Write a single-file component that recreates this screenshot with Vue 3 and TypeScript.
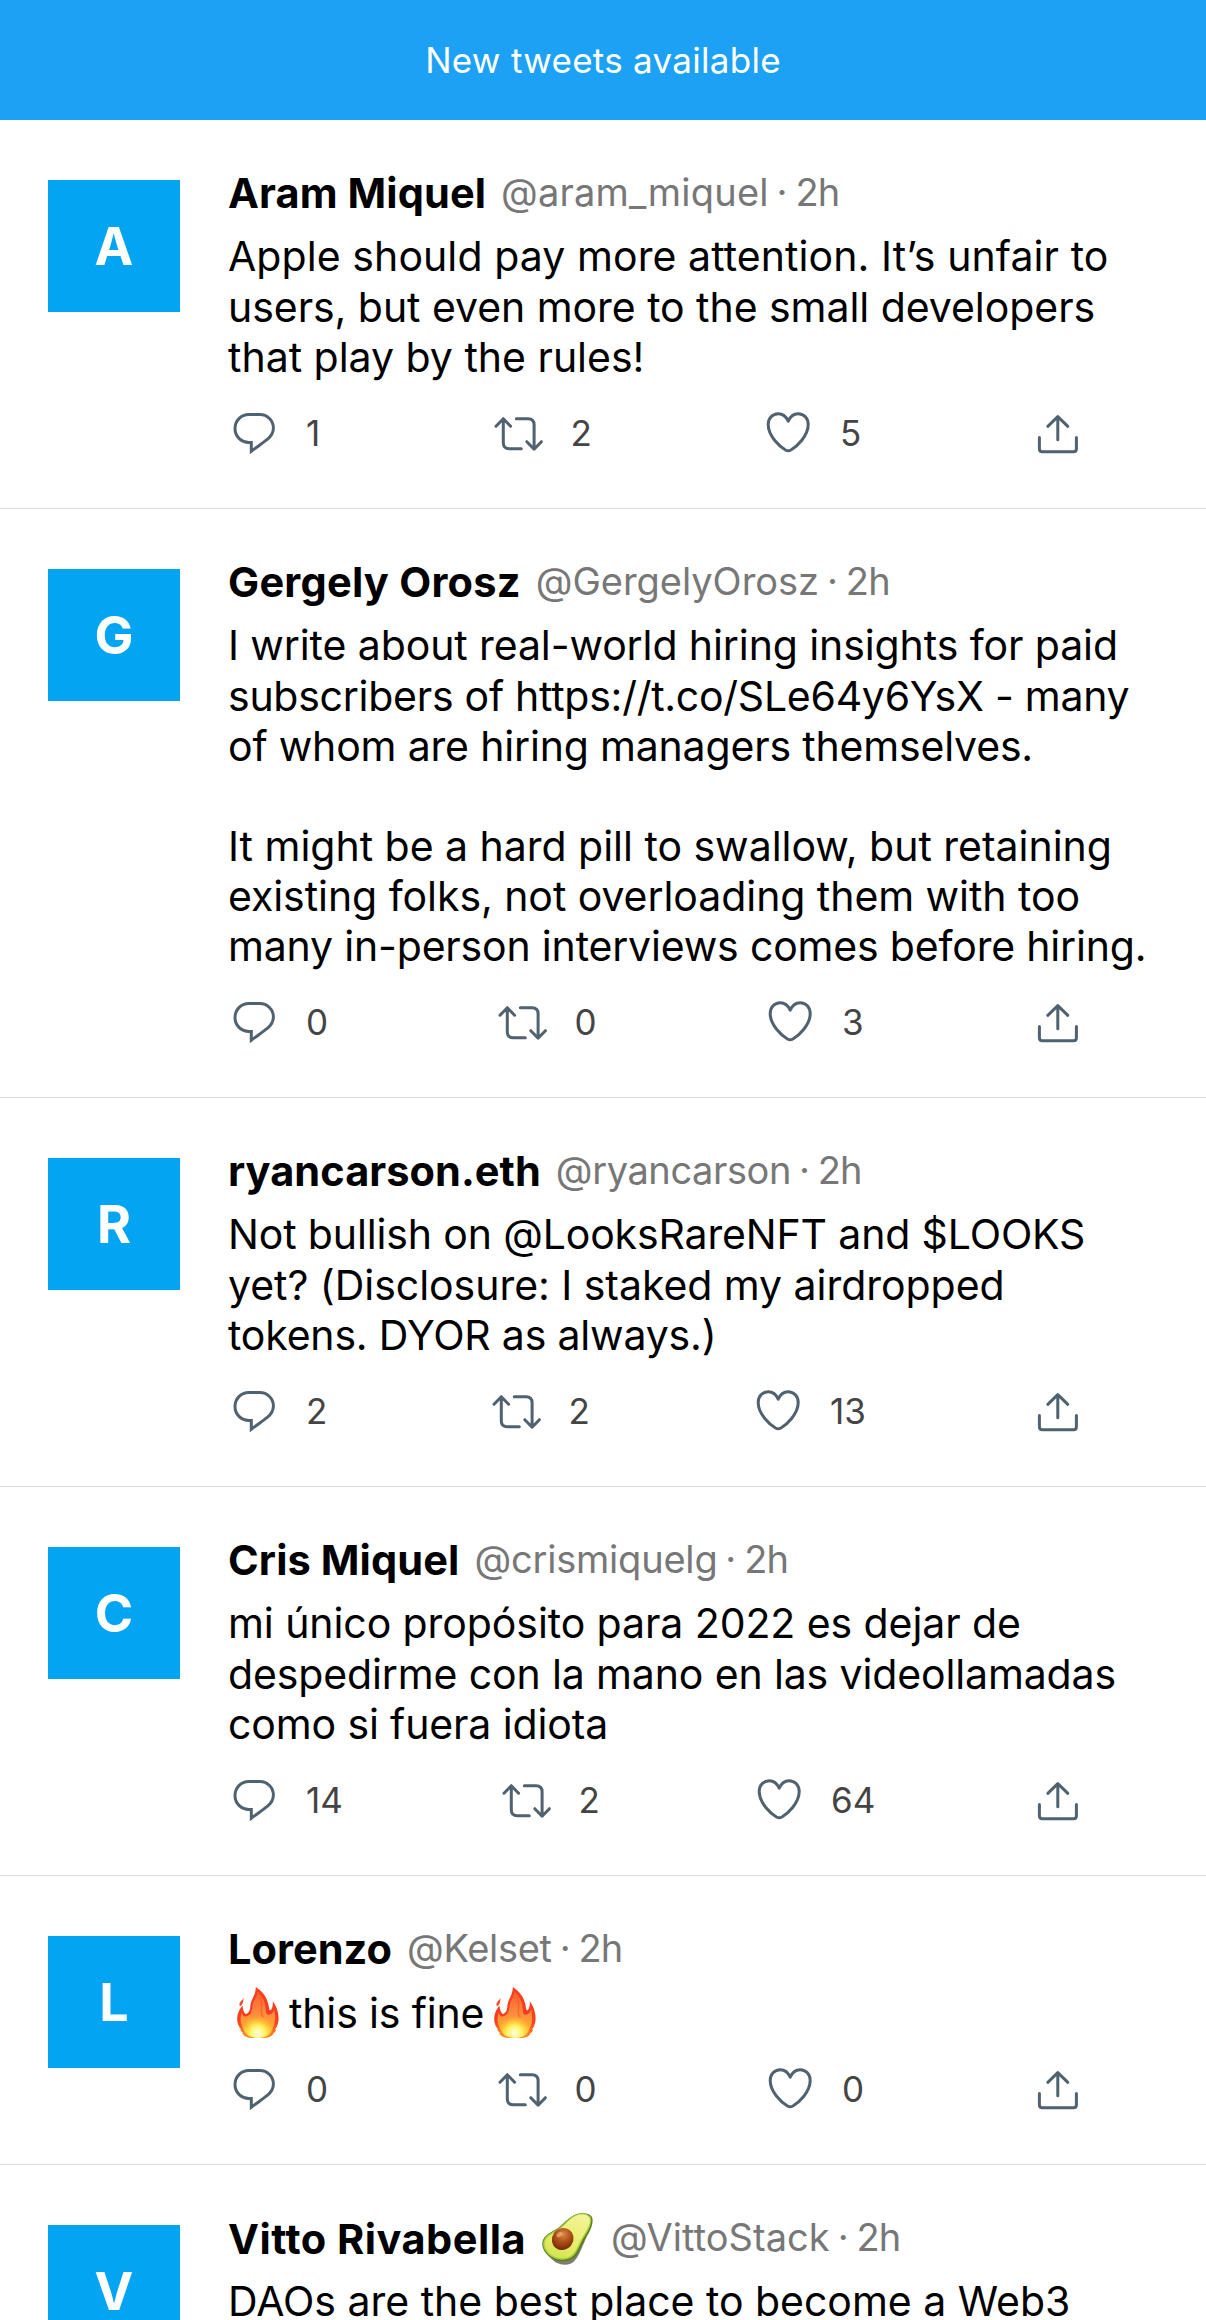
<script setup lang="ts">
interface Line {
  text: string
  ls: number
}
interface Tweet {
  initial: string
  name: string
  nameLs: number
  handle: string
  handleLs: number
  avocado?: boolean
  fire?: boolean
  lines: Line[]
  counts: [string, string, string]
  cols: [number, number, number]
}

const tweets: Tweet[] = [
  {
    initial: 'A', name: 'Aram Miquel', nameLs: 0.1, handle: '@aram_miquel', handleLs: 0.2,
    lines: [
      { text: 'Apple should pay more attention. It’s unfair to', ls: 0.08 },
      { text: 'users, but even more to the small developers', ls: -0.05 },
      { text: 'that play by the rules!', ls: -0.01 },
    ],
    counts: ['1', '2', '5'], cols: [261, 270, 270],
  },
  {
    initial: 'G', name: 'Gergely Orosz', nameLs: 0.25, handle: '@GergelyOrosz', handleLs: -0.03,
    lines: [
      { text: 'I write about real-world hiring insights for paid', ls: -0.1 },
      { text: 'subscribers of https://t.co/SLe64y6YsX - many', ls: -0.26 },
      { text: 'of whom are hiring managers themselves.', ls: -0.18 },
      { text: '', ls: 0 },
      { text: 'It might be a hard pill to swallow, but retaining', ls: -0.02 },
      { text: 'existing folks, not overloading them with too', ls: -0.06 },
      { text: 'many in-person interviews comes before hiring.', ls: -0.18 },
    ],
    counts: ['0', '0', '3'], cols: [265, 268, 268],
  },
  {
    initial: 'R', name: 'ryancarson.eth', nameLs: 0.05, handle: '@ryancarson', handleLs: -0.4,
    lines: [
      { text: 'Not bullish on @LooksRareNFT and $LOOKS', ls: -0.14 },
      { text: 'yet? (Disclosure: I staked my airdropped', ls: -0.04 },
      { text: 'tokens. DYOR as always.)', ls: -0.18 },
    ],
    counts: ['2', '2', '13'], cols: [259, 262, 280],
  },
  {
    initial: 'C', name: 'Cris Miquel', nameLs: 0.12, handle: '@crismiquelg', handleLs: -0.2,
    lines: [
      { text: 'mi único propósito para 2022 es dejar de', ls: -0.08 },
      { text: 'despedirme con la mano en las videollamadas', ls: -0.13 },
      { text: 'como si fuera idiota', ls: -0.13 },
    ],
    counts: ['14', '2', '64'], cols: [269, 253, 279],
  },
  {
    initial: 'L', name: 'Lorenzo', nameLs: 0.05, handle: '@Kelset', handleLs: -0.3, fire: true,
    lines: [{ text: 'this is fine', ls: -0.15 }],
    counts: ['0', '0', '0'], cols: [265, 268, 268],
  },
  {
    initial: 'V', name: 'Vitto Rivabella', nameLs: 0.5, handle: '@VittoStack', handleLs: 0.05, avocado: true,
    lines: [{ text: 'DAOs are the best place to become a Web3', ls: -0.02 }],
    counts: ['0', '0', '0'], cols: [265, 268, 268],
  },
]

const columns = (t: Tweet) => t.cols.map((c) => `${c}px`).join(' ') + ' 1fr'
</script>

<template>
  <main class="screen">
    <!-- shared artwork -->
    <svg class="defs" width="0" height="0" aria-hidden="true">
      <defs>
        <linearGradient id="flameOuter" x1="0" y1="0" x2="0" y2="1">
          <stop offset="0" stop-color="#f8401c" />
          <stop offset="0.65" stop-color="#fb3a20" />
          <stop offset="1" stop-color="#ff8f1f" />
        </linearGradient>
        <linearGradient id="flameInner" x1="0" y1="0" x2="0" y2="1">
          <stop offset="0" stop-color="#f95c30" />
          <stop offset="0.45" stop-color="#fd8a3e" />
          <stop offset="0.75" stop-color="#ffa52f" />
          <stop offset="1" stop-color="#ffdd3a" />
        </linearGradient>
        <radialGradient id="flameCore" cx="0.5" cy="0.84" r="0.55">
          <stop offset="0" stop-color="#fffee8" />
          <stop offset="0.45" stop-color="#fff25c" />
          <stop offset="1" stop-color="#ffc62e" stop-opacity="0" />
        </radialGradient>
        <linearGradient id="avoFlesh" x1="0.8" y1="0" x2="0.3" y2="1">
          <stop offset="0" stop-color="#f3f397" />
          <stop offset="0.6" stop-color="#e8ee6c" />
          <stop offset="1" stop-color="#d3e554" />
        </linearGradient>
        <radialGradient id="avoPit" cx="0.4" cy="0.32" r="0.7">
          <stop offset="0" stop-color="#dd8648" />
          <stop offset="0.45" stop-color="#b2551a" />
          <stop offset="1" stop-color="#742a00" />
        </radialGradient>
        <symbol id="fire" viewBox="0 0 42 51">
          <path fill="url(#flameOuter)" d="M18.8 0C24 3.5 30.5 9.5 31.8 19.5C32 22 32.4 23.6 33.6 23.2C35.4 22.4 36 18 35.8 14.2C38.5 17.5 41.6 24 41.6 31.5C41.6 36 40.2 40 37.8 43L39.5 42.6C38.5 44.8 36.8 46.2 35.5 47L36.4 47.2C34.5 49.5 31 51 27.5 51H14C10 51 6.2 48.6 5 45.8L6.6 46.4C5 45 3.6 43.8 3 42.6L4.4 42.8C1.8 40 .2 36.5 .2 32C.2 26 3 21.5 5.5 18.5C5.7 22 6.5 25 8.5 27C12 26.5 13.2 23 13.4 18.5C13.8 12.5 18.8 8.5 18.8 0Z" />
          <path fill="#fb4a26" d="M6.8 10.8C6 13.5 6.6 16 4.4 18.5C2.4 20 1.8 17.5 3 15.5C4 13.6 5.6 13 6.8 10.8Z" />
          <path fill="url(#flameInner)" d="M20.5 4.5C25 9 28.8 15 28.8 22.5C28.8 27 30 28.5 33 27.5C35.5 26.5 36.6 24.5 37.2 22.5C39 30 38.6 37 35 42.5C32 47.5 28.5 50.5 21 50.5C13.5 50.5 8.5 46.5 5.6 40.5C3 35.5 3 30 4.8 25.5C5.4 27.8 6.4 29.8 8.8 29.4C14.5 28.5 15.2 23 15.6 18.5C16 13.5 20.5 10 20.5 4.5Z" />
          <path fill="none" stroke="#f9581f" stroke-width="1.2" stroke-opacity="0.7" d="M22.5 10C26.5 15 24.5 20 24.2 24C24 27 25 29 26.5 30" />
          <path fill="url(#flameCore)" d="M21 20C27 27 36 33 36.5 40C36 47 29.5 51 21 51C12.5 51 5.5 46.5 4.8 40C5 34 17.5 30 21 20Z" />
        </symbol>
        <symbol id="avocado" viewBox="0 0 51 52">
          <path fill="#6b6555" opacity="0.85" d="M8 44C13 51 22 53.5 29 50.5C36 47 38.5 37 42 30L46 20L30 40Z" />
          <path fill="#5c7f1d" d="M37 .5C42 -.3 49 .2 50.3 5C51.8 12 47 20 42.5 27C39 33 37.5 39 33.5 43.5C28 49.3 17 50 9 45C1.5 40 -1.5 32 1.2 26.5C4.5 20 12 18.5 18 13.5C24 8.5 29 2 37 .5Z" />
          <path fill="#a9cc40" d="M37 .8C42 0 47.5 1 49 5C50.2 11.5 45.5 19 41 26C37.5 32 36 38 32 42.2C26.5 47.7 16.5 48.3 9.5 43.8C2.5 39 -.5 32 2 26.8C5 20.5 12.5 19 18.5 14C24.5 9 29.5 2.2 37 .8Z" />
          <path fill="url(#avoFlesh)" d="M37.5 1.6C42 .9 46.8 1.9 47.8 5.8C48.8 11.5 44.4 18 39.9 25.2C36.4 31.2 34.9 36.8 30.9 41C25.7 46.2 16.9 46.7 10.4 42.6C4.1 38.5 1.2 32 3.4 27.4C6.1 21.6 13.2 20 19.2 15C25.2 10 30.3 3 37.5 1.6Z" />
          <ellipse cx="20.7" cy="26" rx="10.6" ry="11.3" transform="rotate(35 20.7 26)" fill="url(#avoPit)" />
          <ellipse cx="17.6" cy="21.5" rx="3.4" ry="2.2" transform="rotate(-35 17.6 21.5)" fill="#f0b98a" opacity="0.65" />
        </symbol>
      </defs>
    </svg>

    <div class="banner">New tweets available</div>

    <article v-for="t in tweets" :key="t.handle" class="tweet">
      <div class="avatar">{{ t.initial }}</div>
      <div class="content">
        <header class="head" :class="{ 'has-emoji': t.avocado }">
          <span class="name" :style="{ letterSpacing: t.nameLs + 'px' }">{{ t.name }}</span>
          <svg v-if="t.avocado" class="avocado" width="51" height="52"><use href="#avocado" /></svg>
          <span class="meta"><span :style="{ letterSpacing: t.handleLs + 'px' }">{{ t.handle }}</span><span class="dot">{{ ' · ' }}</span><span class="time">2h</span></span>
        </header>

        <div class="body" :class="{ fiery: t.fire }">
          <svg v-if="t.fire" class="fire" width="42" height="51"><use href="#fire" /></svg>
          <div v-for="(l, i) in t.lines" :key="i" class="line" :style="{ letterSpacing: l.ls + 'px' }">{{ l.text }}</div>
          <svg v-if="t.fire" class="fire" width="42" height="51"><use href="#fire" /></svg>
        </div>

        <footer class="actions" :style="{ gridTemplateColumns: columns(t) }">
          <div class="action reply">
            <svg width="53" height="54" viewBox="1 0 53 54">
              <path d="M20.8 8.6H31.8C39.4 8.6 45.4 14.5 45.4 22C45.4 26.5 43 30.4 39.3 33.4C35 36.8 29 40.9 23.3 45.2V36.4H21C13 36.4 7 30.4 7 22.5C7 14.8 13 8.6 20.8 8.6Z" />
            </svg>
            <span>{{ t.counts[0] }}</span>
          </div>
          <div class="action retweet">
            <svg width="58" height="54" viewBox="0 0 58 54">
              <path d="M6 20.2L13.3 12.7L20.6 20.2M13.3 13V36.7Q13.3 42.8 19.4 42.8H31.3" />
              <path d="M26.3 12.8H38Q44.1 12.8 44.1 18.9V43M36.8 35.7L44.1 43.2L51.4 35.7" />
            </svg>
            <span>{{ t.counts[1] }}</span>
          </div>
          <div class="action like">
            <svg width="56" height="54" viewBox="0 0 56 54">
              <path d="M28.2 15.2C26.8 12 23.5 7.7 18.3 7.7C12.5 7.7 8.2 12.3 8.2 18.6C8.2 30.3 20 40.8 25.5 44Q28.2 45.4 30.9 44C36.4 40.8 48.2 30.3 48.2 18.6C48.2 12.3 43.9 7.7 38.1 7.7C32.9 7.7 29.6 12 28.2 15.2Z" />
            </svg>
            <span>{{ t.counts[2] }}</span>
          </div>
          <div class="action">
            <svg width="56" height="54" viewBox="0 0 56 54">
              <path d="M9.4 31.6V42.8Q9.4 45.8 12.4 45.8H43.4Q46.4 45.8 46.4 42.8V31.6" />
              <path d="M17.8 20.3L27.8 10.6L37.8 20.3M27.8 11V33.8" />
            </svg>
          </div>
        </footer>
      </div>
    </article>
  </main>
</template>

<style>
body {
  background: #fff;
  overflow: hidden;
}
</style>

<style scoped>
.screen {
  width: 1206px;
  height: 2320px;
  overflow: hidden;
  font-family: Inter, sans-serif;
  color: #000;
}
.defs {
  display: block;
}
.banner {
  height: 120px;
  background: #1da1f4;
  color: #fff;
  font-size: 35px;
  letter-spacing: 0.28px;
  line-height: 120px;
  text-align: center;
}
.tweet {
  display: flex;
  gap: 48px;
  padding: 60px 0 48px 48px;
  border-bottom: 1px solid #dcdcdc;
}
.avatar {
  flex: none;
  box-sizing: border-box;
  width: 132px;
  height: 132px;
  padding-top: 1px;
  background: #03a5f2;
  color: #fff;
  font-weight: 700;
  font-size: 52px;
  line-height: 132px;
  text-align: center;
}
.content {
  flex: 1;
  min-width: 0;
}
.head {
  display: flex;
  align-items: flex-start;
  height: 51px;
  white-space: pre;
}
.name {
  font-weight: 700;
  font-size: 41.5px;
  line-height: 26px;
}
.has-emoji .name {
  line-height: 28px;
}
.avocado {
  flex: none;
  margin: -12px 3px 0 16px;
}
.meta {
  margin-left: 15px;
  font-size: 38px;
  line-height: 24px;
  color: #777;
}
.dot {
  word-spacing: -2.8px;
}
.time {
  letter-spacing: -0.8px;
}
.line {
  height: 50px;
  font-size: 41px;
  line-height: 50px;
  white-space: pre;
}
.line:first-child {
  height: 51px;
}
.fiery {
  display: flex;
  height: 51px;
  padding-left: 9px;
}
.fiery .line {
  margin: 0 10px;
  line-height: 52px;
}
.fire {
  flex: none;
}
.actions {
  display: grid;
  margin-top: 24px;
  padding-left: 1px;
  height: 54px;
}
.action {
  display: flex;
  font-size: 35px;
  line-height: 55px;
  color: #444;
}
.action svg {
  flex: none;
  fill: none;
  stroke: #50626f;
  stroke-width: 3;
  stroke-linecap: round;
  stroke-linejoin: round;
}
.reply span {
  margin-left: 24px;
}
.reply path {
  stroke-linejoin: miter;
}
.retweet span {
  margin-left: 22.5px;
}
.like span {
  margin-left: 24px;
}
</style>
